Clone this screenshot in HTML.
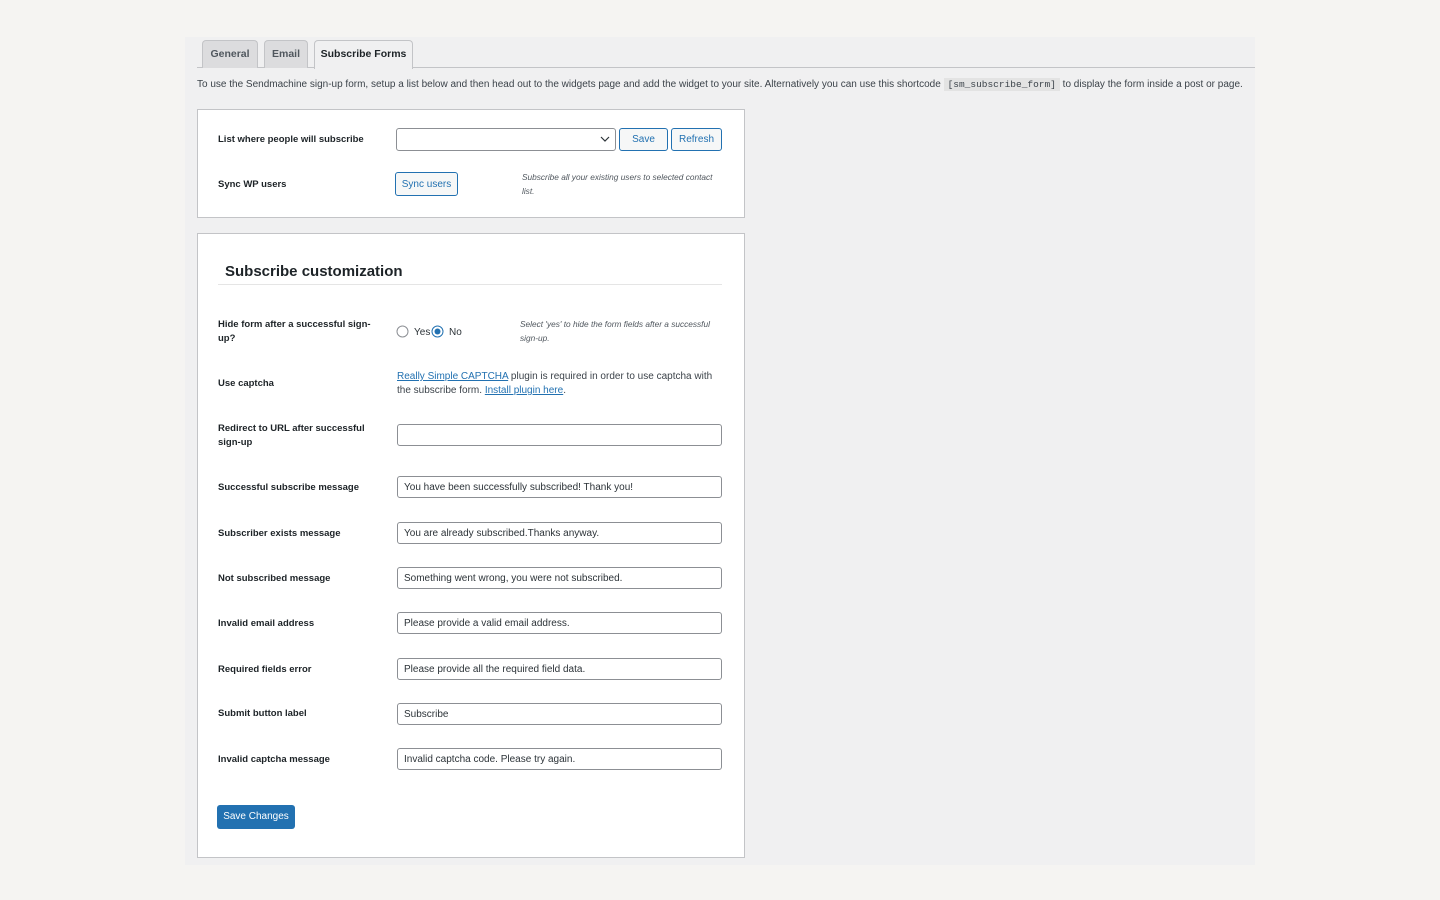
<!DOCTYPE html>
<html><head><meta charset="utf-8"><style>
*{box-sizing:border-box;margin:0;padding:0}
body{width:1440px;height:900px;background:#f5f4f2;font-family:"Liberation Sans",sans-serif;color:#1d2327;position:relative;overflow:hidden;font-size:10px}
.wrap{position:absolute;left:185px;top:37px;width:1070px;height:828px;background:#f0f0f1}
.a{position:absolute}
.tab{position:absolute;top:40px;height:28px;border:1px solid #c3c4c7;border-bottom:none;border-radius:4px 4px 0 0;background:#dcdcde;font-weight:bold;font-size:10.5px;color:#50575e;text-align:center;line-height:27px}
.tab.on{background:#f0f0f1;color:#1d2327;height:29px}
.box{position:absolute;left:197px;width:548px;background:#fff;border:1px solid #c3c4c7}
.lbl{position:absolute;left:218px;font-weight:bold;font-size:9.5px;color:#1d2327;line-height:14px;width:160px;margin-top:1px}
.inp{position:absolute;left:397px;width:325px;height:22px;border:1px solid #8c8f94;border-radius:3px;background:#fff;font-size:10px;line-height:22px;padding-left:6px;color:#2c3338}
.btn{position:absolute;height:23px;border:1px solid #2271b1;border-radius:3px;background:#f6f7f7;color:#2271b1;font-size:10px;line-height:22px;text-align:center}
.desc{position:absolute;font-style:italic;font-size:8.3px;color:#50575e;line-height:14px}
a{color:#2271b1;text-decoration:underline}
</style></head><body>
<div class="wrap"></div>
<div class="a" style="left:197px;top:67px;width:1058px;height:1px;background:#c3c4c7"></div>
<div class="tab" style="left:202px;width:56px">General</div>
<div class="tab" style="left:264px;width:44px">Email</div>
<div class="tab on" style="left:314px;width:99px">Subscribe Forms</div>
<div class="a" style="left:197px;top:78px;font-size:10px;color:#3c434a;white-space:nowrap;line-height:14px">To use the Sendmachine sign-up form, setup a list below and then head out to the widgets page and add the widget to your site. Alternatively you can use this shortcode <span style="font-family:'Liberation Mono',monospace;background:#e3e3e3;padding:1px 4px;font-size:9.5px">[sm_subscribe_form]</span> to display the form inside a post or page.</div>

<div class="box" style="top:109px;height:109px"></div>
<div class="lbl" style="top:132px">List where people will subscribe</div>
<div class="inp" style="left:396px;top:128px;width:220px;height:23px"></div>
<svg class="a" style="left:600px;top:135px" width="10" height="8"><path d="M1 2l4 4 4-4" stroke="#2c3338" fill="none" stroke-width="1.2"/></svg>
<div class="btn" style="left:619px;top:128px;width:49px">Save</div>
<div class="btn" style="left:671px;top:128px;width:51px">Refresh</div>
<div class="lbl" style="top:177px">Sync WP users</div>
<div class="btn" style="left:395px;top:172px;width:63px;height:24px;line-height:23px">Sync users</div>
<div class="desc" style="left:522px;top:170px;width:200px">Subscribe all your existing users to selected contact list.</div>

<div class="box" style="top:233px;height:625px"></div>
<div class="a" style="left:225px;top:263px;font-size:15px;font-weight:bold;color:#1d2327">Subscribe customization</div>
<div class="a" style="left:218px;top:284px;width:504px;height:1px;background:#e5e5e5"></div>

<div class="lbl" style="top:317px">Hide form after a successful sign-up?</div>
<svg class="a" style="left:396px;top:325px" width="80" height="13"><circle cx="6.5" cy="6.5" r="5.5" fill="#fff" stroke="#8c8f94"/><text x="18" y="10" font-size="10" fill="#2c3338" font-family="Liberation Sans">Yes</text><circle cx="41.5" cy="6.5" r="5.5" fill="#fff" stroke="#2271b1"/><circle cx="41.5" cy="6.5" r="3" fill="#2271b1"/><text x="53" y="10" font-size="10" fill="#2c3338" font-family="Liberation Sans">No</text></svg>
<div class="desc" style="left:520px;top:317px;width:200px">Select 'yes' to hide the form fields after a successful sign-up.</div>

<div class="lbl" style="top:376px">Use captcha</div>
<div class="a" style="left:397px;top:370px;width:325px;font-size:10px;line-height:14px;color:#3c434a"><a>Really Simple CAPTCHA</a> plugin is required in order to use captcha with the subscribe form. <a>Install plugin here</a>.</div>

<div class="lbl" style="top:421px;width:155px">Redirect to URL after successful sign-up</div>
<div class="inp" style="top:424px"></div>

<div class="lbl" style="top:480px">Successful subscribe message</div>
<div class="inp" style="top:476px">You have been successfully subscribed! Thank you!</div>
<div class="lbl" style="top:526px">Subscriber exists message</div>
<div class="inp" style="top:522px">You are already subscribed.Thanks anyway.</div>
<div class="lbl" style="top:571px">Not subscribed message</div>
<div class="inp" style="top:567px">Something went wrong, you were not subscribed.</div>
<div class="lbl" style="top:616px">Invalid email address</div>
<div class="inp" style="top:612px">Please provide a valid email address.</div>
<div class="lbl" style="top:662px">Required fields error</div>
<div class="inp" style="top:658px">Please provide all the required field data.</div>
<div class="lbl" style="top:706px">Submit button label</div>
<div class="inp" style="top:703px">Subscribe</div>
<div class="lbl" style="top:752px">Invalid captcha message</div>
<div class="inp" style="top:748px">Invalid captcha code. Please try again.</div>

<div class="a" style="left:217px;top:805px;width:78px;height:24px;background:#2271b1;border-radius:3px;color:#fff;font-size:10px;line-height:24px;text-align:center">Save Changes</div>
</body></html>
